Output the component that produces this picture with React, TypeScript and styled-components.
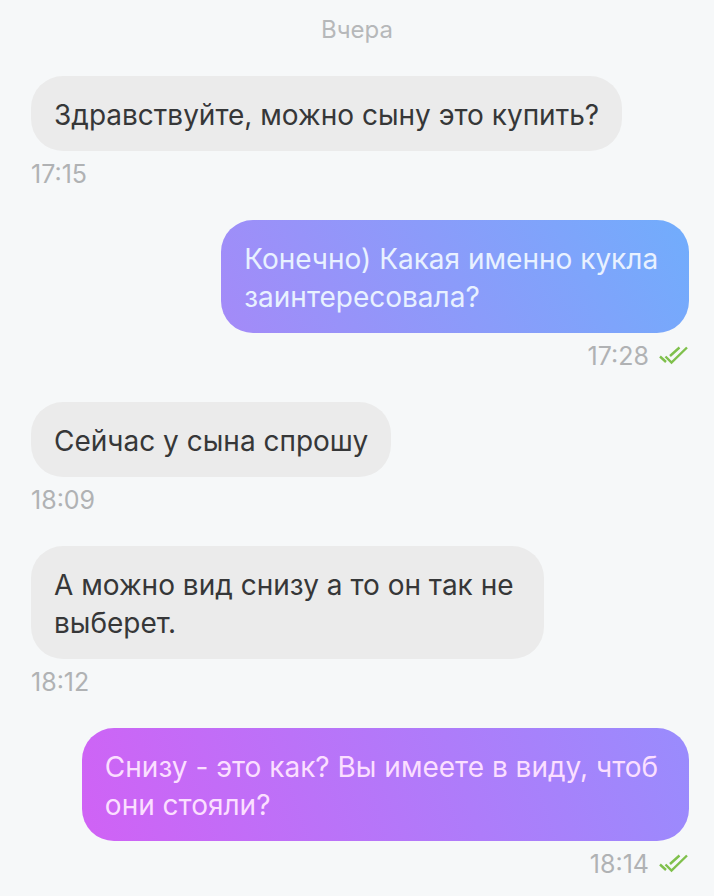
import React from "react";
import styled, { createGlobalStyle } from "styled-components";

const GlobalStyle = createGlobalStyle`
  * { box-sizing: border-box; }
  body {
    margin: 0;
    background: #f6f8f9;
    font-family: Inter, "Liberation Sans", sans-serif;
  }
`;

const Chat = styled.main`
  display: flex;
  flex-direction: column;
  min-height: 100vh;
  padding-top: 12px;
`;

const DayLabel = styled.h2`
  margin: 0 0 28px;
  font-size: 24px;
  font-weight: 400;
  line-height: 36px;
  text-align: center;
  color: #b6b8ba;
`;

const Thread = styled.ol`
  display: flex;
  flex-direction: column;
  gap: 28px;
  margin: 0;
  padding: 0 25px 0 31px;
  list-style: none;
`;

const Message = styled.li<{ $own: boolean }>`
  display: flex;
  flex-direction: column;
  align-items: ${(p) => (p.$own ? "flex-end" : "flex-start")};
`;

const Bubble = styled.p<{ $fill: string; $ink: string }>`
  max-width: 100%;
  margin: 0;
  padding: 20px 23px 17px;
  border-radius: 32px;
  background: ${(p) => p.$fill};
  color: ${(p) => p.$ink};
  font-size: 28px;
  line-height: 38px;
  white-space: break-spaces;
`;

const Meta = styled.div`
  display: flex;
  align-items: center;
  gap: 10px;
  height: 41px;
  padding-top: 4px;
  color: #b0b2b4;
  font-size: 25px;
  line-height: 36px;
`;

const Ticks = () => (
  <svg width="30" height="20" viewBox="0 0 30 20" fill="none" stroke="#7fc04c" strokeWidth="2.4" role="img" aria-label="Прочитано">
    <path d="M1 10.5 L7 16 M6.5 10.5 L12.5 16.5 L28 1.5 M11 10 L20.5 1.5" />
  </svg>
);

type Entry = { text: string; time: string; own: boolean; fill: string; ink: string };

const GREY = "#ebebeb";
const DARK = "#363738";
const entries: Entry[] = [
  { text: "Здравствуйте, можно сыну это купить?", time: "17:15", own: false, fill: GREY, ink: DARK },
  { text: "Конечно) Какая именно кукла \nзаинтересовала?", time: "17:28", own: true, fill: "linear-gradient(60deg, #a48af8, #71adfc)", ink: "#e8f1ff" },
  { text: "Сейчас у сына спрошу", time: "18:09", own: false, fill: GREY, ink: DARK },
  { text: "А можно вид снизу а то он так не \nвыберет.", time: "18:12", own: false, fill: GREY, ink: DARK },
  { text: "Снизу - это как? Вы имеете в виду, чтоб \nони стояли?", time: "18:14", own: true, fill: "linear-gradient(70deg, #d062f5, #998cfd)", ink: "#fbdfff" },
];

export default function App() {
  return (
    <>
      <GlobalStyle />
      <Chat>
        <DayLabel>Вчера</DayLabel>
        <Thread>
          {entries.map((e) => (
            <Message key={e.time} $own={e.own}>
              <Bubble $fill={e.fill} $ink={e.ink}>{e.text}</Bubble>
              <Meta>
                <time>{e.time}</time>
                {e.own && <Ticks />}
              </Meta>
            </Message>
          ))}
        </Thread>
      </Chat>
    </>
  );
}
